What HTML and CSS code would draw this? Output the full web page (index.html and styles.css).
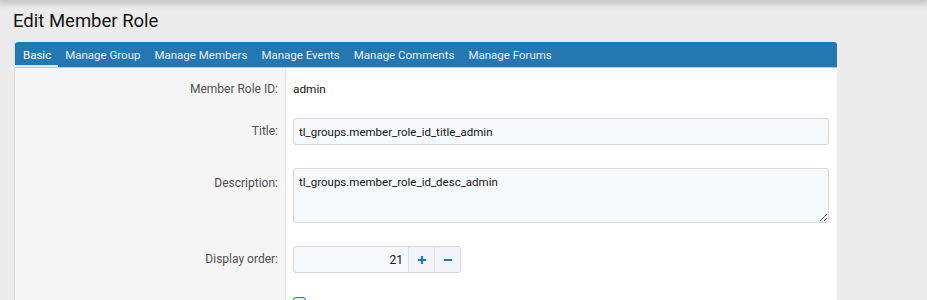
FILE: index.html
```html
<!DOCTYPE html>
<html lang="en">
<head>
    <meta charset="UTF-8" />
    <title>Edit Member Role</title>
    <link rel="stylesheet" href="styles.css">
</head>
<body>
<div class="top-shadow"></div>

<main class="page">
    <h1 class="page-title">Edit Member Role</h1>

    <div class="block">
        <nav class="tabs">
            <a class="tab active">Basic</a>
            <a class="tab">Manage Group</a>
            <a class="tab">Manage Members</a>
            <a class="tab">Manage Events</a>
            <a class="tab">Manage Comments</a>
            <a class="tab">Manage Forums</a>
        </nav>

        <div class="form-body">
            <div class="row row-first">
                <div class="label">Member Role ID:</div>
                <div class="field"><span class="value">admin</span></div>
            </div>
            <div class="row">
                <div class="label label-input">Title:</div>
                <div class="field">
                    <input class="input" type="text" value="tl_groups.member_role_id_title_admin">
                </div>
            </div>
            <div class="row">
                <div class="label label-area">Description:</div>
                <div class="field">
                    <textarea class="input textarea">tl_groups.member_role_id_desc_admin</textarea>
                </div>
            </div>
            <div class="row">
                <div class="label label-input">Display order:</div>
                <div class="field">
                    <div class="spinner">
                        <input class="spin-input" type="text" value="21">
                        <button class="spin-btn">
                            <svg width="10" height="10" viewBox="0 0 10 10"><path d="M5 1v8M1 5h8" stroke="#2577b1" stroke-width="2.2"/></svg>
                        </button>
                        <button class="spin-btn">
                            <svg width="10" height="10" viewBox="0 0 10 10"><path d="M1 5h8" stroke="#2577b1" stroke-width="2.2"/></svg>
                        </button>
                    </div>
                </div>
            </div>
            <div class="row">
                <div class="label"></div>
                <div class="field"><span class="checkbox"></span></div>
            </div>
        </div>
    </div>
</main>
</body>
</html>
```

FILE: styles.css
```css
* {
    box-sizing: border-box;
}
body {
    margin: 0;
    background-color: #ebebeb;
    font-family: Roboto, "Noto Sans", Arial, sans-serif;
    color: #141414;
    height: 300px;
    overflow: hidden;
}
.top-shadow {
    height: 0;
    box-shadow: 0 0 6px 3px rgba(0, 0, 0, 0.22);
}
.page {
    padding: 0 90px 0 13px;
}
.page-title {
    margin: 0;
    padding-top: 10px;
    height: 42px;
    font-size: 18.5px;
    font-weight: 400;
    color: #141414;
}
.block {
    margin-left: 1px;
    border-left: 1px solid #dcdcdc;
}
.tabs {
    display: flex;
    height: 26px;
    background-color: #2577b1;
    border-radius: 3px 3px 0 0;
    border-bottom: 1px solid #a9cbe6;
}
.tab {
    padding: 2px 7px 0;
    font-size: 11.5px;
    line-height: 23px;
    color: #e3eef7;
    border-bottom: 2px solid transparent;
}
.tab:first-child {
    padding-left: 8px;
}
.tab.active {
    color: #ffffff;
    border-bottom-color: #dbe9f4;
}
.form-body {
    background: linear-gradient(to right, #f5f5f5 0, #f5f5f5 270px, #e6e6e6 270px, #e6e6e6 271px, #fefefe 271px);
}
.row {
    display: flex;
    padding: 11px 0 12px;
}
.row-first {
    padding-top: 11px;
    padding-bottom: 8px;
}
.label {
    width: 271px;
    flex-shrink: 0;
    padding-right: 8px;
    text-align: right;
    font-size: 12px;
    line-height: 20px;
    color: #505050;
}
.label-input {
    line-height: 27px;
}
.label-area {
    padding-top: 5px;
}
.field {
    flex: 1;
    padding: 0 8px 0 7px;
    font-size: 11.8px;
    line-height: 20px;
}
.value {
    color: #141414;
}
.input {
    display: block;
    width: 100%;
    height: 27px;
    padding: 3px 5px;
    border: 1px solid #d8d8d8;
    border-radius: 3px;
    background-color: #f5f9fc;
    font-family: inherit;
    font-size: 11.5px;
    color: #141414;
    outline: none;
}
.textarea {
    height: 55px;
    resize: vertical;
    line-height: 20px;
}
.spinner {
    display: flex;
    width: 168px;
    height: 27px;
    border: 1px solid #d8d8d8;
    border-radius: 3px;
    background-color: #f5f9fc;
    overflow: hidden;
}
.spin-input {
    flex: 1;
    min-width: 0;
    border: none;
    background: transparent;
    text-align: right;
    padding: 0 5px;
    font-family: inherit;
    font-size: 12px;
    color: #141414;
    outline: none;
}
.spin-btn {
    width: 26px;
    border: none;
    border-left: 1px solid #e0e4e8;
    background-color: #f1f5f9;
    padding: 0;
    display: flex;
    align-items: center;
    justify-content: center;
}
.checkbox {
    display: inline-block;
    width: 13px;
    height: 13px;
    margin-top: 1px;
    border: 1px solid #2577b1;
    border-radius: 3px;
    background-color: #e8f1f8;
}
```
